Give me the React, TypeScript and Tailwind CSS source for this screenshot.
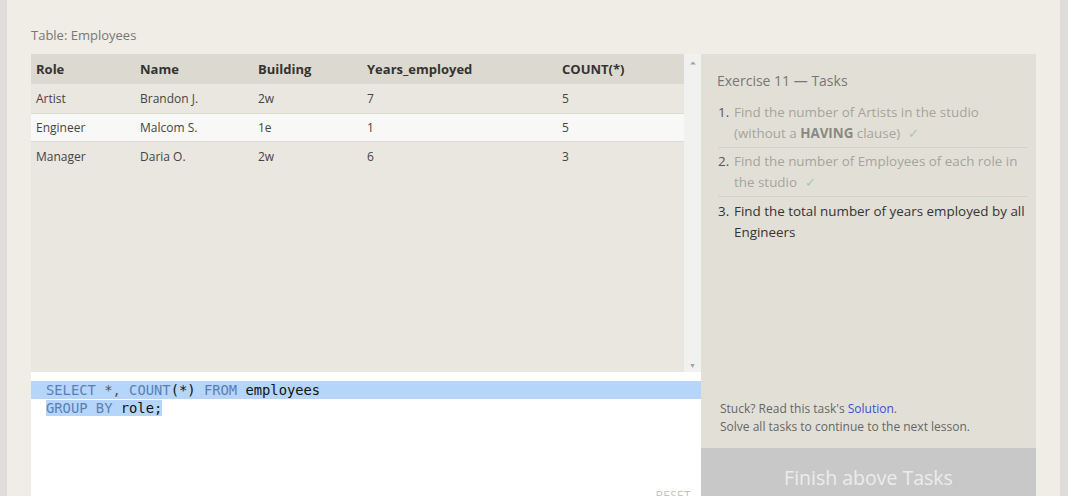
import { ChevronUp } from "lucide-react";

type Row = {
  role: string;
  name: string;
  building: string;
  years: string;
  count: string;
};

const ROWS: Row[] = [
  { role: "Artist", name: "Brandon J.", building: "2w", years: "7", count: "5" },
  { role: "Engineer", name: "Malcom S.", building: "1e", years: "1", count: "5" },
  { role: "Manager", name: "Daria O.", building: "2w", years: "6", count: "3" },
];

const COLS = "grid grid-cols-[104px_118px_109px_195px_1fr]";

function Check() {
  return <span className="ml-2 text-[#a9c9a4]">✓</span>;
}

function ResultTable() {
  return (
    <div className="flex h-[318px] bg-[#e9e7e0]">
      <div className="flex-1 text-[13px]">
        <div className={`${COLS} h-[30px] items-center bg-[#dcdad0] pt-[1px] pl-[5px] font-bold text-[#333]`}>
          <span>Role</span>
          <span>Name</span>
          <span>Building</span>
          <span>Years_employed</span>
          <span>COUNT(*)</span>
        </div>
        {ROWS.map((r, i) => (
          <div
            key={r.role}
            className={`${COLS} h-[29px] items-center pl-[5px] text-[12px] text-[#444] ${
              i === 1 ? "border-y border-[#dddbd6] bg-[#f8f8f7]" : ""
            }`}
          >
            <span>{r.role}</span>
            <span>{r.name}</span>
            <span>{r.building}</span>
            <span>{r.years}</span>
            <span>{r.count}</span>
          </div>
        ))}
      </div>
      <div className="flex w-[17px] flex-col items-center justify-between bg-[#f1f1f0] py-[3px]">
        <ChevronUp className="h-3 w-3 text-[#a3a3a3]" strokeWidth={0} fill="#a3a3a3" />
        <span className="text-[7px] leading-none text-[#a3a3a3]">▼</span>
      </div>
    </div>
  );
}

function Editor() {
  const kw = "text-[#5b7fb3]";
  return (
    <div className="relative h-[124px] bg-white pt-[9px] font-['DejaVu_Sans_Mono',monospace] text-[13.8px] leading-[18px] text-[#111]">
      <div className="bg-[#b5d5fb] pl-[15px] whitespace-pre">
        <span className={kw}>SELECT</span> <span className="text-[#555]">*,</span>{" "}
        <span className={kw}>COUNT</span>(*) <span className={kw}>FROM</span> employees
      </div>
      <div className="pl-[15px]">
        <span className="bg-[#b5d5fb] whitespace-pre">
          <span className={kw}>GROUP BY</span> role;
        </span>
      </div>
      <span className="absolute right-[10px] top-[115px] font-['Open_Sans',sans-serif] text-[12px] tracking-wide text-[#c4c4c4]">
        RESET
      </span>
    </div>
  );
}

function TaskPanel() {
  return (
    <div className="flex w-[335px] flex-col bg-[#e2e0d6] font-['Open_Sans',sans-serif]">
      <div className="px-4 pt-[16px] text-[14px] text-[#777]">Exercise 11 — Tasks</div>
      <ol className="mt-[11px] pr-[8px] pl-[17px] text-[13.4px] leading-[21px]">
        <li className="flex border-b border-[#d5d3c9] pb-[3px]">
          <span className="w-4 text-[#555]">1.</span>
          <span className="flex-1 text-[#a6a49d]">
            Find the number of Artists in the studio (without a{" "}
            <b className="text-[#8a8883]">HAVING</b> clause)
            <Check />
          </span>
        </li>
        <li className="flex border-b border-[#d5d3c9] pt-[3px] pb-[3px]">
          <span className="w-4 text-[#555]">2.</span>
          <span className="flex-1 text-[#a6a49d]">
            Find the number of Employees of each role in the studio
            <Check />
          </span>
        </li>
        <li className="flex pt-[4px] text-[#333]">
          <span className="w-4">3.</span>
          <span className="flex-1">Find the total number of years employed by all Engineers</span>
        </li>
      </ol>
      <div className="mt-auto px-[19px] pb-[12px] text-[12px] leading-[18px] text-[#666]">
        <div>
          Stuck? Read this task's <span className="text-[#3b4fd0]">Solution</span>.
        </div>
        <div>Solve all tasks to continue to the next lesson.</div>
      </div>
      <div className="flex h-[48px] justify-center bg-[#c8c8c8] pt-[20px] text-[19.5px] leading-none text-[#ececec]">
        Finish above Tasks
      </div>
    </div>
  );
}

export default function App() {
  return (
    <div className="flex h-[496px] w-[1068px] overflow-hidden bg-[#e0dcdb] font-['Open_Sans',sans-serif]">
      <div className="ml-[7px] mr-[8px] flex flex-1 flex-col bg-[#efede6] pl-[24px] pr-[24px]">
        <div className="pt-[26px] pb-[10px] text-[13px] leading-[18px] text-[#777]">Table: Employees</div>
        <div className="flex flex-1">
          <div className="flex flex-1 flex-col">
            <ResultTable />
            <Editor />
          </div>
          <TaskPanel />
        </div>
      </div>
    </div>
  );
}
